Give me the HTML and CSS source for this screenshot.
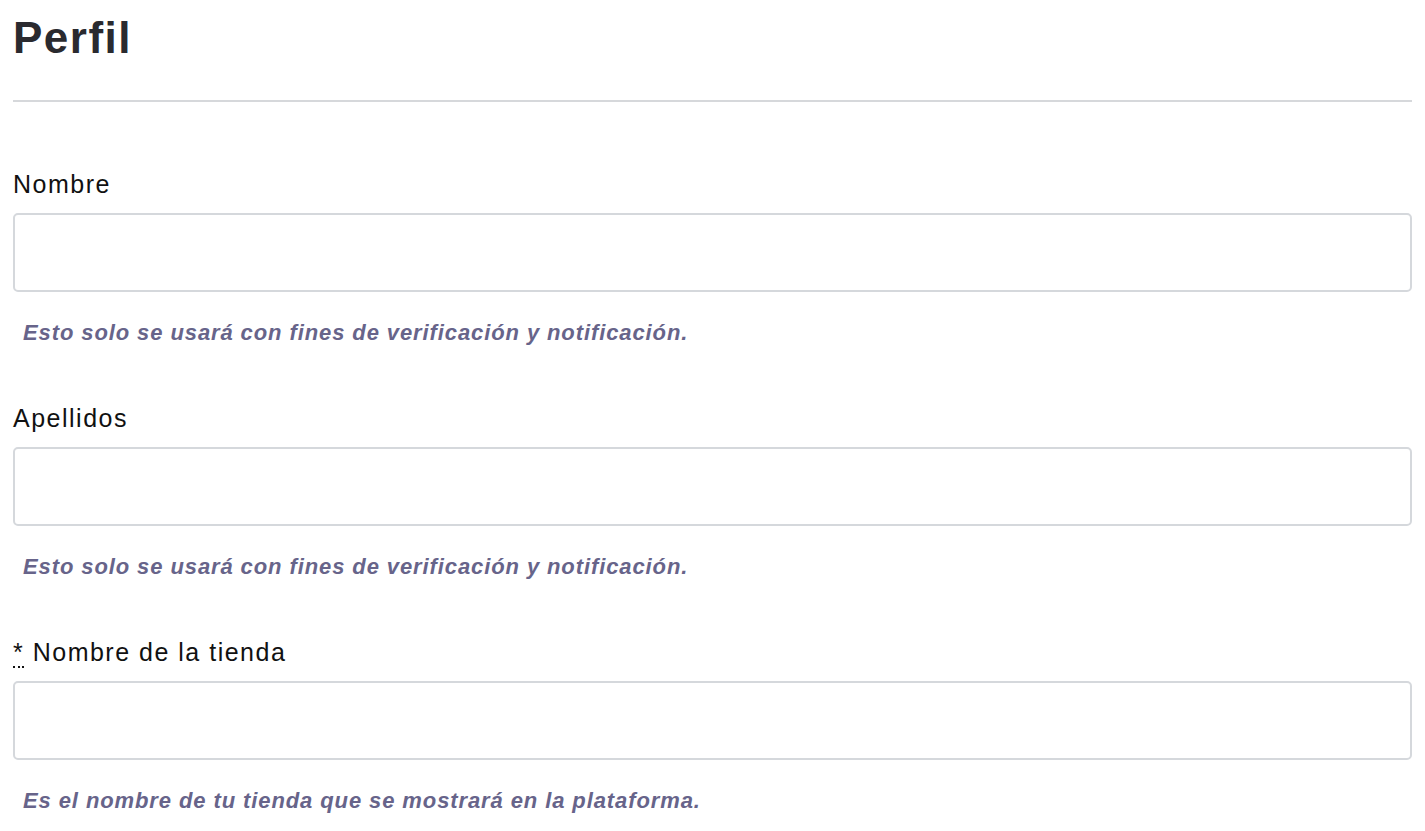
FILE: index.html
```html
<!DOCTYPE html>
<html lang="es">
<head>
<meta charset="utf-8">
<title>Perfil</title>
<link rel="stylesheet" href="styles.css">
</head>
<body>
<main class="page">
  <h1 class="title">Perfil</h1>
  <hr class="divider">
  <form class="form">
    <div class="group">
      <label class="label" for="nombre">Nombre</label>
      <input class="input" id="nombre" type="text">
      <p class="help">Esto solo se usará con fines de verificación y notificación.</p>
    </div>
    <div class="group">
      <label class="label" for="apellidos">Apellidos</label>
      <input class="input" id="apellidos" type="text">
      <p class="help">Esto solo se usará con fines de verificación y notificación.</p>
    </div>
    <div class="group">
      <label class="label" for="tienda"><abbr class="req" title="obligatorio">*</abbr> Nombre de la tienda</label>
      <input class="input" id="tienda" type="text">
      <p class="help">Es el nombre de tu tienda que se mostrará en la plataforma.</p>
    </div>
  </form>
</main>
</body>
</html>
```

FILE: styles.css
```css
html, body {
  margin: 0;
  padding: 0;
  background: #ffffff;
}

body {
  font-family: "Liberation Sans", Arial, Helvetica, sans-serif;
  color: #111111;
}

.page {
  padding: 12px 13px 0 13px;
}

.title {
  margin: 0;
  font-size: 44px;
  line-height: 52px;
  font-weight: 700;
  letter-spacing: 1.5px;
  color: #2a2a2f;
}

.divider {
  margin: 36px 0 0 0;
  border: 0;
  height: 2px;
  background: #d6d8db;
}

.form {
  display: flex;
  flex-direction: column;
  padding-top: 68px;
}

.group {
  display: flex;
  flex-direction: column;
  margin-bottom: 58px;
}

.label {
  font-size: 25px;
  line-height: 29px;
  letter-spacing: 1.5px;
  color: #111111;
  margin-bottom: 14px;
}

.req {
  text-decoration: none;
  border-bottom: 2px dotted #111;
  cursor: help;
}

.input {
  box-sizing: border-box;
  height: 79px;
  width: 100%;
  border: 2px solid #d5d8dc;
  border-radius: 5px;
  background: #fff;
  margin: 0;
  padding: 0 12px;
  font-size: 24px;
  font-family: inherit;
  outline: none;
}

.help {
  margin: 28px 0 0 10px;
  font-size: 22px;
  line-height: 26px;
  letter-spacing: 0.9px;
  font-style: italic;
  font-weight: 700;
  color: #67648a;
}
```
